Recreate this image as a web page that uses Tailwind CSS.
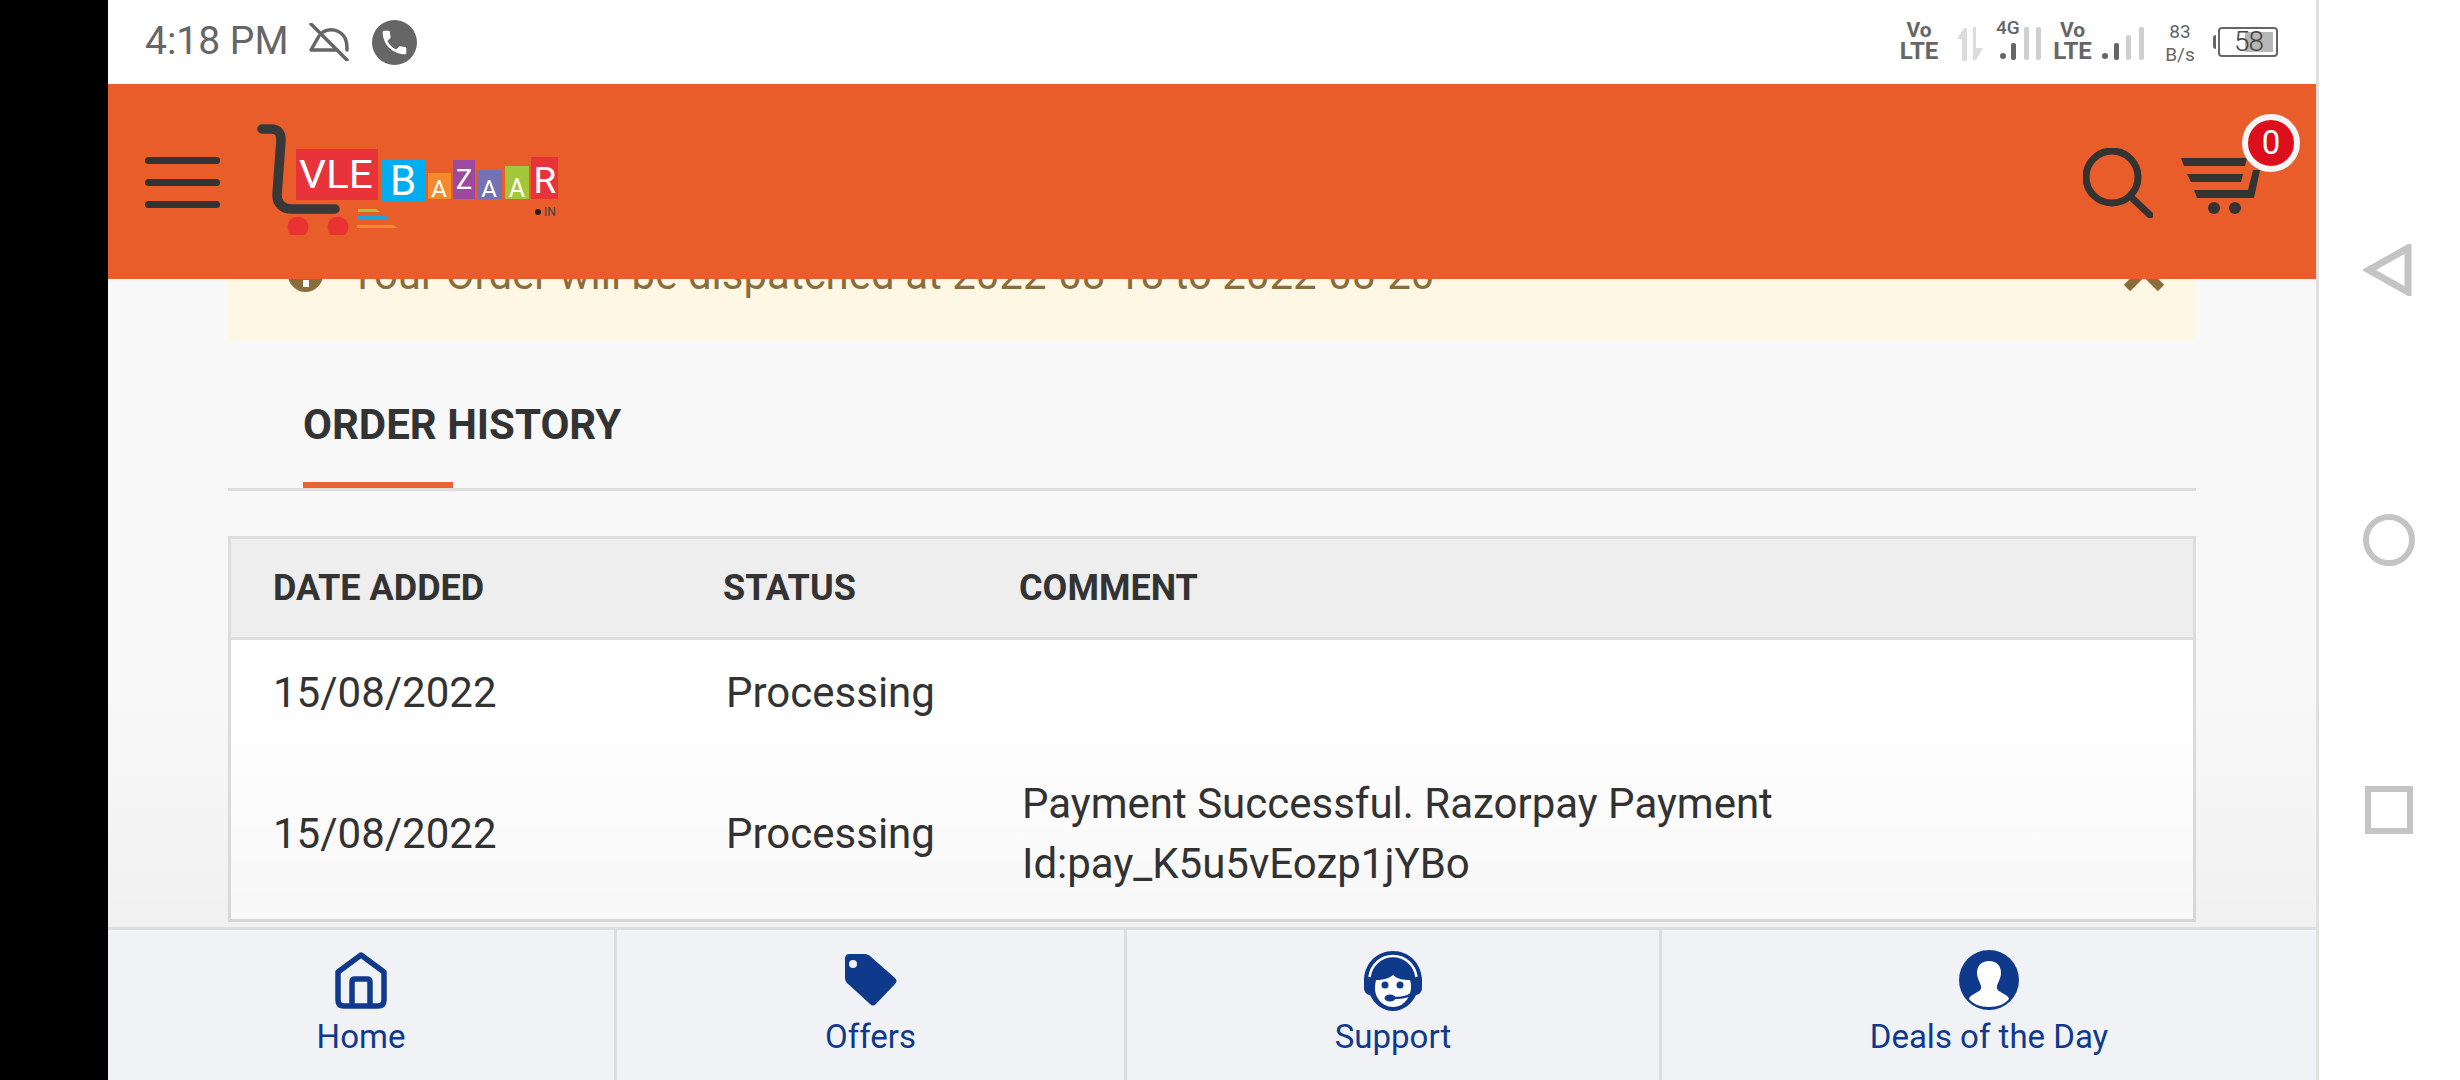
<!DOCTYPE html>
<html lang="en">
<head>
    <meta charset="UTF-8">
    <title>Order History</title>
    <script src="https://cdn.jsdelivr.net/npm/@tailwindcss/browser@4"></script>
</head>
<body class="bg-white font-['Roboto',sans-serif] overflow-hidden">
<div class="flex w-[2460px] h-[1080px]">
    <div class="w-[108px] bg-black"></div>

    <div class="w-[2211px] flex flex-col border-r-[3px] border-[#e0e0e0]">
        <!-- status bar -->
        <div class="h-[84px] flex items-start bg-white text-[#666]">
            <span class="ml-[37px] mt-[19px] text-[39px] leading-[45px]">4:18 PM</span>
            <svg class="ml-[20px] mt-[23px]" width="40" height="38" viewBox="0 0 40 38" fill="none" stroke="#666" stroke-width="3.5" stroke-linecap="round" stroke-linejoin="round">
                <path d="M2 1 38 37"/>
                <path d="M28 27H2L10 13"/>
                <path d="M14 9C20 5 31 6 36 15 38 19 38 23 38 27"/>
            </svg>
            <svg class="ml-[23px] mt-[20px]" width="45" height="45" viewBox="0 0 24 24">
                <circle cx="12" cy="12" r="12" fill="#666"/>
                <path transform="translate(3.6 3.6) scale(.7)" fill="#fff" d="M6.62 10.79c1.44 2.83 3.76 5.14 6.59 6.59l2.2-2.2c.27-.27.67-.36 1.02-.24 1.12.37 2.33.57 3.57.57.55 0 1 .45 1 1V20c0 .55-.45 1-1 1-9.39 0-17-7.61-17-17 0-.55.45-1 1-1h3.5c.55 0 1 .45 1 1 0 1.25.2 2.45.57 3.57.11.35.03.74-.25 1.02l-2.2 2.2z"/>
            </svg>

            <div class="ml-auto mr-[38px] flex items-start">
                <div class="w-[36px] mt-[20px] flex flex-col items-center font-bold">
                    <span class="text-[21px] leading-[20px]">Vo</span>
                    <span class="text-[24px] leading-[22px]">LTE</span>
                </div>
                <svg class="ml-[20px] mt-[27px]" width="26" height="34" viewBox="0 0 26 34" fill="#dcdcdc">
                    <path d="M5 34V12H0L7 1H10V34Z"/>
                    <path d="M16 0H19V21H26L19 33H16Z"/>
                </svg>
                <div class="ml-[13px] w-[49px] relative h-[60px]">
                    <span class="absolute left-0 top-[19px] font-medium text-[19px] leading-[18px]">4G</span>
                    <svg class="absolute left-0 top-[26px]" width="49" height="35" viewBox="0 0 49 35">
                        <circle cx="7" cy="30" r="3" fill="#666"/>
                        <rect x="15" y="17" width="5" height="17" rx="2" fill="#666"/>
                        <rect x="28" y="1" width="5" height="33" rx="2" fill="#d0d0d0"/>
                        <rect x="40" y="1" width="5" height="33" rx="2" fill="#d0d0d0"/>
                    </svg>
                </div>
                <div class="ml-[9px] w-[37px] mt-[20px] flex flex-col items-center font-bold">
                    <span class="text-[21px] leading-[20px]">Vo</span>
                    <span class="text-[24px] leading-[22px]">LTE</span>
                </div>
                <svg class="ml-[10px] mt-[26px]" width="47" height="35" viewBox="0 0 47 35">
                    <circle cx="4" cy="30" r="3" fill="#666"/>
                    <rect x="13" y="17" width="5" height="17" rx="2" fill="#666"/>
                    <rect x="25" y="9" width="5" height="25" rx="2" fill="#d0d0d0"/>
                    <rect x="38" y="1" width="5" height="33" rx="2" fill="#d0d0d0"/>
                </svg>
                <div class="ml-[18px] w-[28px] mt-[20px] flex flex-col items-center text-[19px] leading-[23px]">
                    <span>83</span><span>B/s</span>
                </div>
                <div class="ml-[19px] mt-[27px] flex items-center">
                    <div class="w-[3px] h-[14px] bg-[#666] rounded-l-sm mr-[2px]"></div>
                    <div class="relative w-[60px] h-[30px] border-[2px] border-[#666] rounded-[4px]">
                        <div class="absolute right-[3px] top-[3px] bottom-[3px] w-[28px] bg-[#b7b7b7]"></div>
                        <span class="absolute left-[14px] top-[-2px] text-[28px] leading-[30px] font-light text-[#444] tracking-[-1px]">58</span>
                    </div>
                </div>
            </div>
        </div>

        <!-- header -->
        <div class="h-[195px] flex items-start bg-[#e85d2a]">
            <div class="ml-[37px] mt-[73px] w-[75px] flex flex-col gap-[15px]">
                <div class="h-[7px] rounded-full bg-[#333]"></div>
                <div class="h-[7px] rounded-full bg-[#333]"></div>
                <div class="h-[7px] rounded-full bg-[#333]"></div>
            </div>
            <svg class="ml-[35px] mt-[36px]" width="310" height="115" viewBox="255 120 310 115">
                <path d="M262 129H271C278 129 281 133 281 140L277 195C277 204 283 209 292 209H335" fill="none" stroke="#383838" stroke-width="9.500" stroke-linecap="round"/>
                <circle cx="298" cy="227" r="10.500" fill="#e93232"/>
                <circle cx="338" cy="227" r="10.500" fill="#e93232"/>
                <path d="M358 209H376L380 212H358Z" fill="#a2c73b"/>
                <path d="M357 216H385L390 220H357Z" fill="#1ba5dc"/>
                <path d="M357 225H393L398 228H357Z" fill="#f58a2c"/>
                <rect x="296" y="149" width="82" height="51" fill="#e8333a"/>
                <rect x="381" y="160" width="45" height="41" fill="#00aeef"/>
                <rect x="428" y="173" width="23" height="26" fill="#f58a2c"/>
                <rect x="453" y="160" width="22" height="39" fill="#9b4b9f"/>
                <rect x="477" y="170" width="25" height="29" fill="#7472b5"/>
                <rect x="505" y="166" width="24" height="33" fill="#a2c73b"/>
                <rect x="531" y="157" width="27" height="42" fill="#e8333a"/>
                <g fill="#fff" font-family="Roboto, sans-serif" text-anchor="middle">
                    <text x="336" y="188" font-size="39" textLength="74" lengthAdjust="spacingAndGlyphs">VLE</text>
                    <text x="403" y="195" font-size="42">B</text>
                    <text x="439" y="197" font-size="24">A</text>
                    <text x="464" y="189" font-size="27">Z</text>
                    <text x="489" y="197" font-size="24">A</text>
                    <text x="517" y="197" font-size="25">A</text>
                    <text x="545" y="193" font-size="37">R</text>
                </g>
                <circle cx="538" cy="212" r="3" fill="#222"/>
                <text x="544" y="216" font-size="12" fill="#444" font-family="Roboto, sans-serif">IN</text>
            </svg>
            <svg class="ml-auto mt-[64px]" width="70" height="70" viewBox="2083 148 70 70" fill="none" stroke="#333" stroke-width="7" stroke-linecap="round">
                <circle cx="2112" cy="177" r="26"/>
                <path d="M2133 199 2150 215"/>
            </svg>
            <div class="relative ml-[27px] mr-[54px] mt-[71px]">
                <svg class="block" width="82" height="61" viewBox="2180 155 82 61" fill="#333">
                    <path d="M2181 158H2247L2245 166H2184Z"/>
                    <path d="M2187 174H2243L2241 182H2191Z"/>
                    <path d="M2194 190H2248L2253 170H2260L2254 198H2197Z"/>
                    <circle cx="2214" cy="208" r="6"/>
                    <circle cx="2235" cy="208" r="6"/>
                </svg>
                <div class="absolute left-[62px] top-[-41px] w-[58px] h-[58px] rounded-full bg-[#dd0f1d] border-[6px] border-[#f6f6f6] flex items-center justify-center text-white text-[33px]">0</div>
            </div>
        </div>

        <!-- page content -->
        <div class="relative flex-1 overflow-hidden bg-[#f8f8f8]">
            <div class="ml-[120px] w-[1968px] mt-[-71px]">
                <div class="h-[132px] bg-[#fdf7e3] flex items-center text-[#8a6d3b] text-[42px] pl-[60px]">
                    <svg width="35" height="35" viewBox="0 0 35 35">
                        <circle cx="17.500" cy="17.500" r="17.500" fill="#8a6d3b"/>
                        <rect x="15" y="23" width="6" height="7" fill="#fff"/>
                        <rect x="15" y="6" width="6" height="4" fill="#fff"/>
                    </svg>
                    <span class="ml-[27px]">Your Order will be dispatched at 2022-08-18 to 2022-08-20</span>
                    <svg class="ml-auto mr-[32px] mb-[6px]" width="40" height="40" viewBox="0 0 40 40" stroke="#8a6d3b" stroke-width="9">
                        <path d="M3 3 37 37M37 3 3 37"/>
                    </svg>
                </div>

                <div class="h-[151px] border-b-[3px] border-[#ddd] pl-[75px] flex">
                    <div class="w-[150px] border-b-[6px] mb-[-3px] border-[#e96333] self-stretch h-[148px]">
                        <h2 class="pt-[60px] text-[42px] leading-[50px] font-bold text-[#333] whitespace-nowrap">ORDER HISTORY</h2>
                    </div>
                </div>

                <div class="mt-[45px] border-[3px] border-[#ddd] bg-white">
                    <table class="w-full text-left text-[#333]">
                        <thead>
                            <tr class="h-[99px] bg-[#eee] text-[36px] border-b-[3px] border-[#ddd]">
                                <th class="w-[450px] pl-[42px] font-bold">DATE ADDED</th>
                                <th class="w-[296px] pl-[42px] font-bold">STATUS</th>
                                <th class="pl-[42px] font-bold">COMMENT</th>
                            </tr>
                        </thead>
                        <tbody class="text-[42px] leading-[60px]">
                            <tr class="h-[105px]">
                                <td class="pl-[42px] pt-[3px]">15/08/2022</td>
                                <td class="pl-[45px] pt-[3px]">Processing</td>
                                <td class="pl-[46px] pt-[3px]"></td>
                            </tr>
                            <tr class="h-[176px]">
                                <td class="pl-[42px] pt-[6px]">15/08/2022</td>
                                <td class="pl-[45px] pt-[6px]">Processing</td>
                                <td class="pl-[45px] pt-[6px]">Payment Successful. Razorpay Payment<br>Id:pay_K5u5vEozp1jYBo</td>
                            </tr>
                        </tbody>
                    </table>
                </div>
            </div>
            <div class="absolute inset-x-0 bottom-0 h-[240px] bg-linear-to-b from-transparent to-black/3 pointer-events-none"></div>
        </div>

        <!-- bottom nav -->
        <div class="h-[153px] grid grid-cols-[509px_510px_535px_1fr] bg-[#f0f2f6] border-t-[3px] border-[#dcdde0] text-[#0f3a8c] text-[33px] leading-[40px]">
            <div class="flex flex-col items-center pt-[22px] border-r-[3px] border-[#dcdde0]">
                <svg width="52" height="58" viewBox="335 953 52 58" fill="none" stroke="#0f3a8c" stroke-width="5.500" stroke-linejoin="round">
                    <path d="M361 956 384 973V1001C384 1005 382 1007 378 1007H344C340 1007 338 1005 338 1001V973Z"/>
                    <path d="M352 1007V983C352 981 353 980 355 980H367C369 980 370 981 370 983V1007"/>
                </svg>
                <span class="mt-[7px]">Home</span>
            </div>
            <div class="flex flex-col items-center pt-[22px] border-r-[3px] border-[#dcdde0]">
                <svg width="52" height="58" viewBox="845 953 52 58">
                    <path fill="#0f3a8c" fill-rule="evenodd" d="M849 955H865C867 955 869 956 870 957L895 979C897 981 897 983 895 985L876 1005C874 1007 872 1007 870 1005L847 984C846 983 845 981 845 979V959C845 957 847 955 849 955ZM853 961A4 4 0 1 0 853 969 4 4 0 1 0 853 961Z"/>
                </svg>
                <span class="mt-[7px]">Offers</span>
            </div>
            <div class="flex flex-col items-center pt-[21px] border-r-[3px] border-[#dcdde0]">
                <svg width="60" height="60" viewBox="0 0 60 60">
                    <path fill="#0f3a8c" d="M30 0C14 0 2 12 1 28V37C1 41 4 44 7 44 11 53 20 60 30 60 40 60 49 53 53 44 56 44 59 41 59 37V28C58 12 46 0 30 0Z"/>
                    <path d="M6.500 26C8 14 18 5 30 5 42 5 52 14 53.500 26" fill="none" stroke="#fff" stroke-width="2.500"/>
                    <path fill="#fff" d="M30 24C27 27 20 29 13 29 11 38 12 44 16 49 19 53 24 56 30 56 37 56 42 52 45 47 48 42 49 35 47 29 40 29 34 28 30 24Z"/>
                    <circle cx="22" cy="34" r="3.500" fill="#0f3a8c"/>
                    <circle cx="37" cy="34" r="3.500" fill="#0f3a8c"/>
                    <ellipse cx="27" cy="47" rx="5.500" ry="3.500" fill="#0f3a8c"/>
                    <path d="M28 47C36 47 44 47 50 42" fill="none" stroke="#0f3a8c" stroke-width="2.500"/>
                </svg>
                <span class="mt-[6px]">Support</span>
            </div>
            <div class="flex flex-col items-center pt-[20px]">
                <svg width="60" height="60" viewBox="0 0 60 60">
                    <circle cx="30" cy="30" r="30" fill="#0f3a8c"/>
                    <path fill="#fff" d="M30 11C22 11 18 16 18 23 18 28 21 32 22 36 23 40 20 41 15 44 12 46 10 47 10 49 14 54 21 57 30 57 39 57 46 54 50 49 50 47 48 46 45 44 40 41 37 40 38 36 39 32 42 28 42 23 42 16 38 11 30 11Z"/>
                </svg>
                <span class="mt-[7px]">Deals of the Day</span>
            </div>
        </div>
    </div>

    <!-- android nav keys -->
    <div class="flex-1 flex flex-col items-center justify-center gap-[218px] bg-white pr-[2px]">
        <svg width="52" height="52" viewBox="0 0 52 52" fill="none" stroke="#c4c4c4" stroke-width="7">
            <path d="M45 4V48L6 26Z"/>
        </svg>
        <svg width="52" height="52" viewBox="0 0 52 52" fill="none" stroke="#c4c4c4" stroke-width="6">
            <circle cx="26" cy="26" r="23"/>
        </svg>
        <svg width="52" height="52" viewBox="0 0 52 52" fill="none" stroke="#c4c4c4" stroke-width="6">
            <rect x="5" y="5" width="42" height="42"/>
        </svg>
    </div>
</div>
</body>
</html>
